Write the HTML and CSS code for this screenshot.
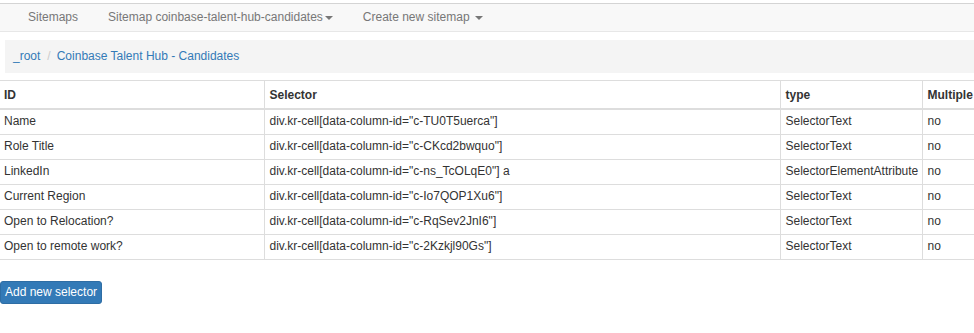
FILE: index.html
```html
<!DOCTYPE html>
<html lang="en">
<head>
    <meta charset="UTF-8">
    <title>Web Scraper - Sitemap</title>
    <link rel="stylesheet" href="styles.css">
</head>
<body>
    <nav class="navbar">
        <ul class="nav">
            <li><a href="#">Sitemaps</a></li>
            <li><a href="#">Sitemap coinbase-talent-hub-candidates<span class="caret"></span></a></li>
            <li><a href="#">Create new sitemap <span class="caret"></span></a></li>
        </ul>
    </nav>

    <ol class="breadcrumb">
        <li><a href="#">_root</a></li>
        <li><a href="#">Coinbase Talent Hub - Candidates</a></li>
    </ol>

    <div class="table-wrap">
        <table class="selectors">
            <colgroup>
                <col class="col-id">
                <col class="col-selector">
                <col class="col-type">
                <col class="col-multiple">
            </colgroup>
            <thead>
                <tr>
                    <th>ID</th>
                    <th>Selector</th>
                    <th>type</th>
                    <th>Multiple</th>
                </tr>
            </thead>
            <tbody>
                <tr>
                    <td>Name</td>
                    <td>div.kr-cell[data-column-id="c-TU0T5uerca"]</td>
                    <td>SelectorText</td>
                    <td>no</td>
                </tr>
                <tr>
                    <td>Role Title</td>
                    <td>div.kr-cell[data-column-id="c-CKcd2bwquo"]</td>
                    <td>SelectorText</td>
                    <td>no</td>
                </tr>
                <tr>
                    <td>LinkedIn</td>
                    <td>div.kr-cell[data-column-id="c-ns_TcOLqE0"] a</td>
                    <td>SelectorElementAttribute</td>
                    <td>no</td>
                </tr>
                <tr>
                    <td>Current Region</td>
                    <td>div.kr-cell[data-column-id="c-Io7QOP1Xu6"]</td>
                    <td>SelectorText</td>
                    <td>no</td>
                </tr>
                <tr>
                    <td>Open to Relocation?</td>
                    <td>div.kr-cell[data-column-id="c-RqSev2JnI6"]</td>
                    <td>SelectorText</td>
                    <td>no</td>
                </tr>
                <tr>
                    <td>Open to remote work?</td>
                    <td>div.kr-cell[data-column-id="c-2Kzkjl90Gs"]</td>
                    <td>SelectorText</td>
                    <td>no</td>
                </tr>
            </tbody>
        </table>
    </div>

    <button class="btn-primary" type="button">Add new selector</button>
</body>
</html>
```

FILE: styles.css
```css
/* Basic styling */
html, body {
    overflow-x: hidden;
}
body {
    font-family: "Liberation Sans", Arial, sans-serif;
    font-size: 12px;
    line-height: 17px;
    color: #333;
    margin: 0;
    padding: 3px 0 0;
    background: #fff;
}
a {
    color: #337ab7;
    text-decoration: none;
}

/* Top navigation */
.navbar {
    background-color: #f8f8f8;
    border-top: 1px solid #d4d4d4;
    border-bottom: 1px solid #e7e7e7;
    height: 27px;
}
.nav {
    list-style: none;
    margin: 0;
    padding: 0 0 0 13px;
    display: flex;
}
.nav a {
    display: block;
    color: #777;
    padding: 5px 15px;
    line-height: 17px;
}
.caret {
    display: inline-block;
    width: 0;
    height: 0;
    margin-left: 2px;
    vertical-align: middle;
    border-top: 4px solid #777;
    border-left: 4px solid transparent;
    border-right: 4px solid transparent;
}

/* Breadcrumb */
.breadcrumb {
    list-style: none;
    margin: 8px 0 0 5px;
    padding: 8px 8px;
    height: 17px;
    background-color: #f4f4f4;
    display: flex;
}
.breadcrumb li + li::before {
    content: "/";
    color: #ccc;
    padding: 0 6px 0 7px;
}

/* Selector table */
.table-wrap {
    margin-top: 7px;
    width: 974px;
    overflow: hidden;
}
.selectors {
    table-layout: fixed;
    width: 1022px;
    border-collapse: collapse;
    border-top: 1px solid #ddd;
}
.col-id { width: 264px; }
.col-selector { width: 516px; }
.col-type { width: 142px; }
.col-multiple { width: 100px; }
.selectors th,
.selectors td {
    text-align: left;
    padding: 3px 5px 4px;
    border-left: 1px solid #ddd;
    border-bottom: 1px solid #ddd;
    white-space: nowrap;
    overflow: hidden;
}
.selectors th {
    padding: 6px 5px 4px;
    border-bottom: 2px solid #ddd;
}
.selectors th:first-child,
.selectors td:first-child {
    border-left: none;
    padding-left: 4px;
}

/* Buttons */
.btn-primary {
    display: block;
    margin-top: 21px;
    font-family: inherit;
    font-size: 12px;
    line-height: 17px;
    padding: 2px 4px;
    color: #fff;
    background-color: #337ab7;
    border: 1px solid #2e6da4;
    border-radius: 3px;
    cursor: pointer;
}
.btn-primary:hover {
    background-color: #286090;
}
```
